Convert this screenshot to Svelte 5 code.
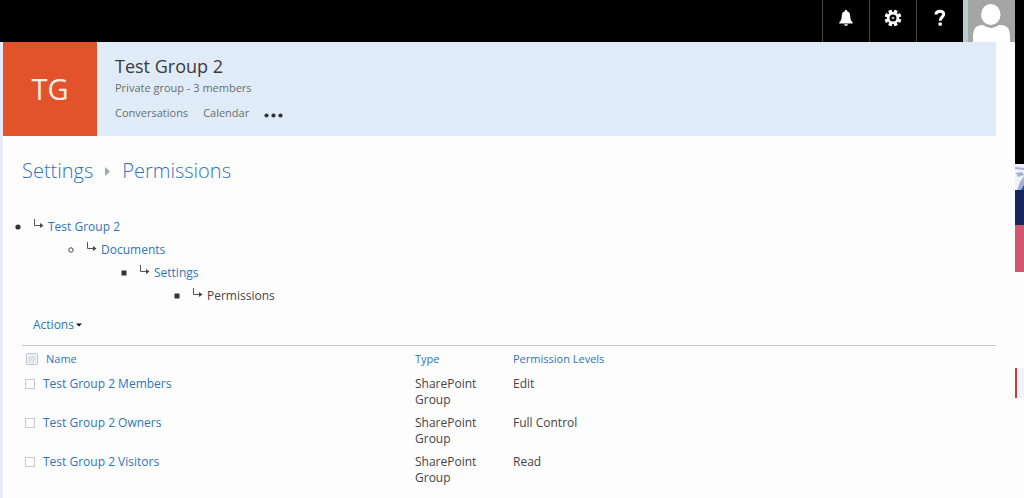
<script>
  const rows = [
    { name: 'Test Group 2 Members', type: 'SharePoint Group', level: 'Edit' },
    { name: 'Test Group 2 Owners', type: 'SharePoint Group', level: 'Full Control' },
    { name: 'Test Group 2 Visitors', type: 'SharePoint Group', level: 'Read' }
  ];
  const trail = ['Test Group 2', 'Documents', 'Settings', 'Permissions'];
</script>

{#snippet branch(depth)}
  <ul>
    <li>
      <div class="node">
        <svg class="marker" width="6" height="6" viewBox="0 0 6 6" aria-hidden="true">
          {#if depth === 0}
            <circle cx="3" cy="3" r="2.6" fill="#333" />
          {:else if depth === 1}
            <circle cx="3" cy="3" r="2.2" fill="none" stroke="#444" />
          {:else}
            <rect x="0.5" y="0.5" width="5" height="5" fill="#333" />
          {/if}
        </svg>
        <svg class="elbow" width="11" height="16" viewBox="0 0 11 16" aria-hidden="true">
          <path d="M1.5 0V6.5H9" fill="none" stroke="#555" />
          <path d="M7 4L10.5 6.5L7 9Z" fill="#444" />
        </svg>
        {#if depth < trail.length - 1}
          <a href="#{trail[depth]}">{trail[depth]}</a>
        {:else}
          <span>{trail[depth]}</span>
        {/if}
      </div>
      {#if depth < trail.length - 1}
        {@render branch(depth + 1)}
      {/if}
    </li>
  </ul>
{/snippet}

<div class="shell">
  <div class="page">
    <header class="suite">
      <button aria-label="Notifications">
        <svg width="16" height="18" viewBox="0 0 16 18" fill="#fff">
          <path d="M7 1.2Q8 .2 9 1.2L9.2 2.2C12 3 12.2 5.5 12.3 8C12.4 11 13.5 12.2 14.7 13.3V14.5H1.3V13.3C2.5 12.2 3.6 11 3.7 8C3.8 5.5 4 3 6.8 2.2ZM6 15.3H10Q9.6 17 8 17Q6.4 17 6 15.3Z" />
        </svg>
      </button>
      <button aria-label="Settings">
        <svg width="18" height="18" viewBox="0 0 18 18">
          <g fill="#fff">
            {#each [22.5, 67.5, 112.5, 157.5] as angle}
              <rect x="7.2" y="0.6" width="3.6" height="16.8" rx="0.4" transform="rotate({angle} 9 9)" />
            {/each}
            <circle cx="9" cy="9" r="6" />
          </g>
          <circle cx="9" cy="9" r="3.5" fill="#000" />
          <circle cx="9" cy="9" r="1.3" fill="#bbb" />
        </svg>
      </button>
      <button aria-label="Help">
        <svg width="14" height="18" viewBox="0 0 14 18">
          <path d="M3 5.5C3.1 3.2 4.8 2.3 7 2.3C9.4 2.3 10.7 3.5 10.7 5.3C10.7 7.8 7.2 8 7.2 11.8" fill="none" stroke="#fff" stroke-width="3" />
          <rect x="5.5" y="13.6" width="3.4" height="3.2" rx="1" fill="#fff" />
        </svg>
      </button>
      <button class="me" aria-label="Account">
        <svg width="47" height="42" viewBox="0 0 47 42">
          <rect width="47" height="42" fill="#a5a5a5" />
          <path d="M5 42V36Q5 25 14 25H15Q23 31 31 25H33Q42 25 42 36V42Z" fill="#fff" />
          <ellipse cx="22.8" cy="14.5" rx="9.7" ry="10.5" fill="#fff" />
        </svg>
      </button>
    </header>

    <main>
      <section class="group">
        <div class="tile">TG</div>
        <div class="about">
          <h1>Test Group 2</h1>
          <p>Private group - 3 members</p>
          <nav>
            <a href="#conversations">Conversations</a>
            <a href="#calendar">Calendar</a>
            <button aria-label="More">
              <svg width="19" height="5" viewBox="0 0 19 5" fill="#333">
                <circle cx="2.5" cy="2.5" r="2.1" />
                <circle cx="9.5" cy="2.5" r="2.1" />
                <circle cx="16.5" cy="2.5" r="2.1" />
              </svg>
            </button>
          </nav>
        </div>
      </section>

      <h2>
        <a href="#settings">Settings</a>
        <svg width="5" height="9" viewBox="0 0 5 9" aria-hidden="true"><path d="M0 0L5 4.5L0 9Z" fill="#a2a7aa" /></svg>
        <a href="#permissions">Permissions</a>
      </h2>

      <div class="tree">{@render branch(0)}</div>

      <section class="list">
        <button class="actions">
          Actions
          <svg width="6" height="4" viewBox="0 0 6 4" aria-hidden="true"><path d="M0 .5H6L3 3.5Z" fill="#111" /></svg>
        </button>
        <table>
          <thead>
            <tr>
              <th class="pick">
                <button aria-label="Select all">
                  <svg width="12" height="12" viewBox="0 0 12 12">
                    <rect x="0.5" y="0.5" width="11" height="11" rx="1" fill="#eef2f8" stroke="#c3c7cb" />
                    <path d="M2.5 6L5 3M3 9L8 3M6 9.5L9.5 5" fill="none" stroke="#b0c6e2" />
                  </svg>
                </button>
              </th>
              <th class="name"><a href="#name">Name</a></th>
              <th class="type"><a href="#type">Type</a></th>
              <th><a href="#levels">Permission Levels</a></th>
            </tr>
          </thead>
          <tbody>
            {#each rows as row}
              <tr>
                <td class="pick"><input type="checkbox" aria-label={row.name} /></td>
                <td class="name"><a href="#{row.name}">{row.name}</a></td>
                <td class="type">{row.type}</td>
                <td>{row.level}</td>
              </tr>
            {/each}
          </tbody>
        </table>
      </section>
    </main>
  </div>

  <aside aria-hidden="true">
    <div class="dark"></div>
    <svg width="9" height="26" viewBox="0 0 9 26">
      <rect width="9" height="26" fill="#eef2fa" />
      <path d="M0 3L9 4V6L0 5ZM1 9L7 8L9 11L3 13ZM9 12V26H2L5 18Z" fill="#a4b2d8" />
      <path d="M9 21V26H6Z" fill="#2852b0" />
    </svg>
    <div class="navy"></div>
    <div class="rose"></div>
    <div class="mark"></div>
  </aside>
</div>

<style>
  :global(body) {
    margin: 0;
    background: #fdfdfe;
  }
  .shell {
    display: grid;
    grid-template-columns: minmax(0, 1fr) 9px;
    min-height: 100vh;
    overflow: hidden;
    font: 12px/16px "Open Sans", "Noto Sans", sans-serif;
    color: #444;
  }
  a {
    color: #2d74bd;
    text-decoration: none;
  }
  button {
    padding: 0;
    border: 0;
    background: none;
    font: inherit;
    color: inherit;
    cursor: pointer;
  }
  svg {
    flex: none;
    display: block;
  }
  .page {
    display: flex;
    flex-direction: column;
  }
  .suite {
    display: flex;
    justify-content: flex-end;
    height: 42px;
    background: #000;
  }
  .suite button {
    display: flex;
    justify-content: center;
    box-sizing: border-box;
    width: 47px;
    padding-top: 9px;
    border-left: 1px solid #4a4447;
  }
  .suite .me {
    width: auto;
    padding: 0;
    border-left: 5px solid #b6ccd2;
  }
  main {
    flex: 1;
    border-left: 3px solid #e6ebfc;
    padding-right: 19px;
  }
  .group {
    display: flex;
    background: #dfecf8;
  }
  .tile {
    display: grid;
    place-items: center;
    width: 94px;
    height: 94px;
    background: #e2532c;
    color: #fdeee6;
    font-size: 29px;
    line-height: 32px;
  }
  .about {
    padding: 12px 18px 0;
  }
  h1, h2, p {
    margin: 0;
    font-weight: 400;
  }
  h1 {
    color: #3a3a3a;
    font-size: 18px;
    line-height: 24px;
  }
  p, nav {
    color: #6a6c70;
    font-size: 11px;
    line-height: 20px;
  }
  nav {
    display: flex;
    align-items: center;
    gap: 15px;
    padding-top: 5px;
  }
  nav a {
    color: inherit;
  }
  nav button {
    padding-top: 4px;
  }
  h2 {
    display: flex;
    align-items: center;
    gap: 12px;
    padding: 20px 19px 0;
    font-size: 20px;
    font-weight: 300;
    line-height: 30px;
  }
  .tree {
    padding: 29px 0 0 12px;
  }
  ul {
    margin: 0;
    padding: 0;
    list-style: none;
  }
  ul ul {
    padding-left: 53px;
  }
  .node {
    display: flex;
    align-items: center;
    height: 23px;
  }
  .marker {
    margin-right: 12px;
  }
  .elbow {
    margin-right: 4px;
  }
  .list {
    padding: 8px 0 0 19px;
  }
  .actions {
    display: flex;
    align-items: center;
    gap: 2px;
    height: 20px;
    margin-left: 11px;
    color: #2d74bd;
  }
  table {
    width: 100%;
    margin-top: 10px;
    border-top: 1px solid #c6c6c8;
    border-collapse: collapse;
    table-layout: fixed;
  }
  th, td {
    padding: 4px 0 3px;
    text-align: left;
    vertical-align: top;
    font-weight: 400;
  }
  th {
    padding: 5px 0;
    font-size: 11px;
  }
  .pick {
    width: 21px;
  }
  .name {
    width: 372px;
  }
  th.name a {
    padding-left: 3px;
  }
  .type {
    width: 62px;
    padding-right: 36px;
  }
  th button {
    display: block;
    padding: 2px 0 0 4px;
  }
  input {
    appearance: none;
    display: block;
    box-sizing: border-box;
    width: 10px;
    height: 10px;
    margin: 3px;
    border: 1px solid #c9cac9;
    background: #fff;
  }
  aside {
    display: flex;
    flex-direction: column;
  }
  .dark {
    height: 164px;
    background: #000;
  }
  .navy {
    height: 35px;
    background: #14265c;
  }
  .rose {
    height: 47px;
    background: #d3566e;
  }
  .mark {
    height: 30px;
    margin-top: 96px;
    border-left: 2px solid #d6382a;
    background: #f0f3fb;
  }
</style>
